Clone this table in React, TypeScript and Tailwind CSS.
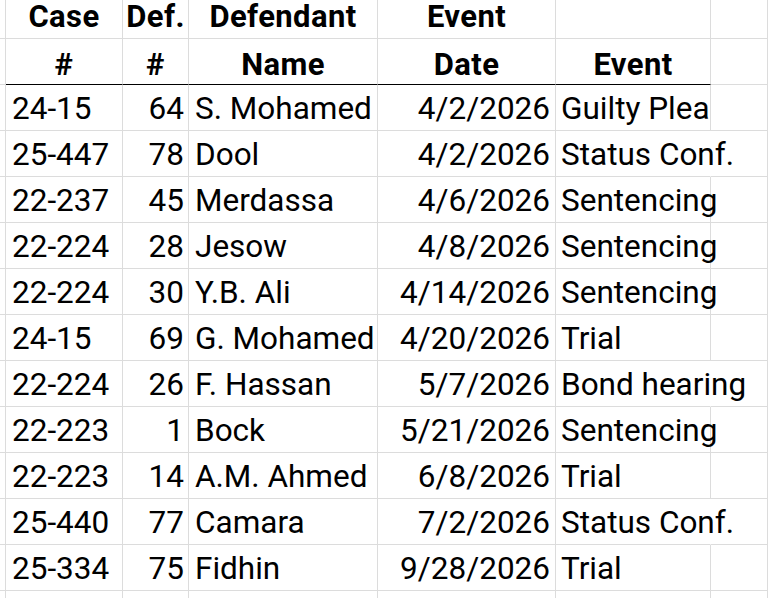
import React from "react";

type Row = [string, string, string, string, string, boolean?];

const rows: Row[] = [
  ["24-15", "64", "S. Mohamed", "4/2/2026", "Guilty Plea"],
  ["25-447", "78", "Dool", "4/2/2026", "Status Conf.", true],
  ["22-237", "45", "Merdassa", "4/6/2026", "Sentencing"],
  ["22-224", "28", "Jesow", "4/8/2026", "Sentencing"],
  ["22-224", "30", "Y.B. Ali", "4/14/2026", "Sentencing"],
  ["24-15", "69", "G. Mohamed", "4/20/2026", "Trial"],
  ["22-224", "26", "F. Hassan", "5/7/2026", "Bond hearing", true],
  ["22-223", "1", "Bock", "5/21/2026", "Sentencing"],
  ["22-223", "14", "A.M. Ahmed", "6/8/2026", "Trial"],
  ["25-440", "77", "Camara", "7/2/2026", "Status Conf.", true],
  ["25-334", "75", "Fidhin", "9/28/2026", "Trial"],
];

const cell = "border-r border-b border-[#dcdcdc] flex items-end whitespace-nowrap overflow-visible";
const thick = "border-r border-r-[#dcdcdc] border-b border-b-black flex items-end justify-center pb-[4px]";

export default function App() {
  return (
    <div
      className="w-[768px] h-[598px] overflow-hidden bg-white text-black"
      style={{ fontFamily: "Roboto, 'Liberation Sans', sans-serif" }}
    >
      {/* Header row 1 */}
      <div className="flex h-[39px] text-[31px] leading-[30px] font-bold tracking-[0.4px]">
        <div className={`${cell} w-[6px]`} />
        <div className={`${cell} w-[117px] justify-center pb-[6px]`}>Case</div>
        <div className={`${cell} w-[66px] justify-center pb-[6px]`}>Def.</div>
        <div className={`${cell} w-[189px] justify-center pb-[6px]`}>Defendant</div>
        <div className={`${cell} w-[178px] justify-center pb-[6px]`}>Event</div>
        <div className={`${cell} w-[155px]`} />
        <div className={`${cell} flex-1`} />
      </div>
      {/* Header row 2 */}
      <div className="flex h-[46px] text-[31px] leading-[30px] font-bold tracking-[0.4px]">
        <div className={`${cell} w-[6px]`} />
        <div className={`${thick} w-[117px]`}>#</div>
        <div className={`${thick} w-[66px]`}>#</div>
        <div className={`${thick} w-[189px]`}>Name</div>
        <div className={`${thick} w-[178px]`}>Date</div>
        <div className={`${thick} w-[155px]`}>Event</div>
        <div className={`${cell} flex-1`} />
      </div>
      {rows.map((r, i) => (
        <div key={i} className="flex h-[46px] text-[31.5px] leading-[32px]">
          <div className={`${cell} w-[6px]`} />
          <div className={`${cell} w-[117px] pl-[6px] pb-[5px]`}>{r[0]}</div>
          <div className={`${cell} w-[66px] justify-end pr-[4px] pb-[5px]`}>{r[1]}</div>
          <div className={`${cell} w-[189px] pl-[6px] pb-[5px]`}>{r[2]}</div>
          <div className={`${cell} w-[178px] justify-end pr-[5px] pb-[5px]`}>{r[3]}</div>
          <div
            className={`${r[5] ? "border-r border-r-transparent border-b border-b-[#dcdcdc] flex items-end whitespace-nowrap overflow-visible" : cell} w-[155px] pl-[5px] pb-[5px]`}
          >
            <span className="relative z-10">{r[4]}</span>
          </div>
          <div className={`${cell} flex-1`} />
        </div>
      ))}
      <div className="flex h-[20px]">
        <div className={`${cell} w-[6px]`} />
        <div className={`${cell} w-[117px]`} />
        <div className={`${cell} w-[66px]`} />
        <div className={`${cell} w-[189px]`} />
        <div className={`${cell} w-[178px]`} />
        <div className={`${cell} w-[155px]`} />
        <div className={`${cell} flex-1`} />
      </div>
    </div>
  );
}
